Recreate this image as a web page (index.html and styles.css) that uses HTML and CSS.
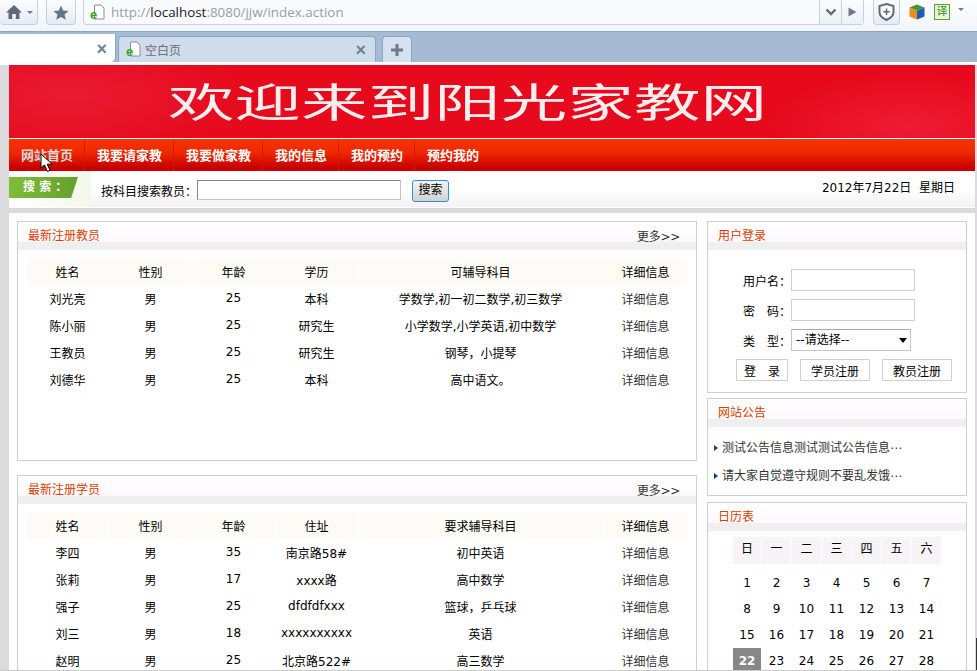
FILE: index.html
```html
<!DOCTYPE html>
<html lang="zh-CN">
<head>
    <meta charset="UTF-8">
    <title>阳光家教网</title>
    <link rel="stylesheet" href="styles.css">
</head>
<body>
<div id="window">
    <div id="toolbar">
        <div class="tool_btn home_btn">
            <svg width="18" height="16" viewBox="0 0 18 16"><path d="M9 1 L17 8.5 L14.5 8.5 L14.5 15 L10.8 15 L10.8 10 L7.2 10 L7.2 15 L3.5 15 L3.5 8.5 L1 8.5 Z" fill="#5d6b7c"/></svg>
            <i class="caret"></i>
        </div>
        <div class="tool_btn star_btn">
            <svg width="16" height="15" viewBox="0 0 16 15"><path d="M8 0.5 L10.2 5.5 L15.6 6 L11.5 9.5 L12.8 14.8 L8 12 L3.2 14.8 L4.5 9.5 L0.4 6 L5.8 5.5 Z" fill="#64748a"/></svg>
        </div>
        <div id="urlbar">
            <svg class="page_icon" width="16" height="17" viewBox="0 0 16 17"><path d="M4.5 1 H11 L14 4 V15 H4.5 Z" fill="#fff" stroke="#8a8f96"/><text x="0" y="15" class="ie_e">e</text></svg>
            <span class="url"><span class="grey">http://</span>localhost<span class="grey">:8080/jjw/index.action</span></span>
            <div class="url_end">
                <svg width="12" height="8" viewBox="0 0 12 8"><path d="M1.5 1.5 L6 6 L10.5 1.5" fill="none" stroke="#5d6b7c" stroke-width="2.4"/></svg>
            </div>
            <div class="url_end">
                <svg width="9" height="10" viewBox="0 0 9 10"><path d="M0.5 0.5 L8.5 5 L0.5 9.5 Z" fill="#6d7b8c"/></svg>
            </div>
        </div>
        <div class="tool_btn shield_btn">
            <svg width="17" height="18" viewBox="0 0 17 18"><path d="M8.5 1 L15.5 3 V9 C15.5 13 12 15.5 8.5 17 C5 15.5 1.5 13 1.5 9 V3 Z" fill="#fff" stroke="#5d6b7c" stroke-width="2"/><path d="M8.5 5.5 V12 M5.2 8.8 H11.8" stroke="#5d6b7c" stroke-width="1.6"/></svg>
        </div>
        <svg class="cube" width="16" height="16" viewBox="0 0 16 16"><path d="M8 0.5 L15.5 3.5 L8 6.8 L0.5 3.5 Z" fill="#3f9a2a"/><path d="M0.5 3.5 L8 6.8 V15.5 L0.5 12.5 Z" fill="#ee8c18"/><path d="M15.5 3.5 L8 6.8 V15.5 L15.5 12.5 Z" fill="#1c5cb8"/></svg>
        <span class="yi">译</span>
        <i class="caret yi_caret"></i>
    </div>

    <div id="tabbar">
        <div class="tab tab_active"><span class="tab_x">×</span></div>
        <div class="tab tab_blank">
            <svg class="page_icon" width="16" height="17" viewBox="0 0 16 17"><path d="M4.5 1 H11 L14 4 V15 H4.5 Z" fill="#fff" stroke="#8a8f96"/><text x="0" y="15" class="ie_e">e</text></svg>
            <span class="tab_title">空白页</span>
            <span class="tab_x">×</span>
        </div>
        <div class="tab tab_new">
            <svg width="14" height="14" viewBox="0 0 14 14"><path d="M7 1 V13 M1 7 H13" stroke="#6d7b8c" stroke-width="3"/></svg>
        </div>
    </div>
    <div id="tabline"></div>

    <div id="page">
        <div id="site">
            <div id="banner"><span id="banner_title">欢迎来到阳光家教网</span></div>
            <div id="nav">
                <a class="nav_item nav_hover">网站首页</a>
                <a class="nav_item">我要请家教</a>
                <a class="nav_item">我要做家教</a>
                <a class="nav_item">我的信息</a>
                <a class="nav_item">我的预约</a>
                <a class="nav_item nav_last">预约我的</a>
                <svg id="cursor" width="14" height="20" viewBox="0 0 14 20"><path d="M1 1 V15 L4.5 12 L7.5 18.5 L10 17.3 L7.2 11.2 L12 11 Z" fill="#fff" stroke="#000"/></svg>
            </div>
            <div id="searchbar">
                <div class="search_tag"><span class="search_label">搜 索 ：</span></div>
                <span class="search_text">按科目搜索教员：</span>
                <input class="search_input" type="text">
                <button class="search_btn">搜索</button>
                <span class="today">2012年7月22日&nbsp; 星期日</span>
            </div>
            <div id="content">
                <div id="left_col">
                    <div class="panel teacher_panel">
                        <div class="panel_head">
                            <span class="panel_title">最新注册教员</span>
                            <span class="more">更多&gt;&gt;</span>
                        </div>
                        <div class="list_body">
                            <table class="list">
                                <colgroup><col class="c1"><col class="c1"><col class="c1"><col class="c1"><col class="c5"><col class="c6"></colgroup>
                                <tr><th>姓名</th><th>性别</th><th>年龄</th><th>学历</th><th>可辅导科目</th><th>详细信息</th></tr>
                                <tr><td>刘光亮</td><td>男</td><td>25</td><td>本科</td><td>学数学,初一初二数学,初三数学</td><td class="detail">详细信息</td></tr>
                                <tr><td>陈小丽</td><td>男</td><td>25</td><td>研究生</td><td>小学数学,小学英语,初中数学</td><td class="detail">详细信息</td></tr>
                                <tr><td>王教员</td><td>男</td><td>25</td><td>研究生</td><td>钢琴，小提琴</td><td class="detail">详细信息</td></tr>
                                <tr><td>刘德华</td><td>男</td><td>25</td><td>本科</td><td>高中语文。</td><td class="detail">详细信息</td></tr>
                            </table>
                        </div>
                    </div>
                    <div class="panel">
                        <div class="panel_head">
                            <span class="panel_title">最新注册学员</span>
                            <span class="more">更多&gt;&gt;</span>
                        </div>
                        <div class="list_body">
                            <table class="list">
                                <colgroup><col class="c1"><col class="c1"><col class="c1"><col class="c1"><col class="c5"><col class="c6"></colgroup>
                                <tr><th>姓名</th><th>性别</th><th>年龄</th><th>住址</th><th>要求辅导科目</th><th>详细信息</th></tr>
                                <tr><td>李四</td><td>男</td><td>35</td><td>南京路58#</td><td>初中英语</td><td class="detail">详细信息</td></tr>
                                <tr><td>张莉</td><td>男</td><td>17</td><td>xxxx路</td><td>高中数学</td><td class="detail">详细信息</td></tr>
                                <tr><td>强子</td><td>男</td><td>25</td><td>dfdfdfxxx</td><td>篮球，乒乓球</td><td class="detail">详细信息</td></tr>
                                <tr><td>刘三</td><td>男</td><td>18</td><td>xxxxxxxxxx</td><td>英语</td><td class="detail">详细信息</td></tr>
                                <tr><td>赵明</td><td>男</td><td>25</td><td>北京路522#</td><td>高三数学</td><td class="detail">详细信息</td></tr>
                            </table>
                        </div>
                    </div>
                </div>
                <div id="right_col">
                    <div class="panel">
                        <div class="panel_head"><span class="panel_title">用户登录</span></div>
                        <div class="login_body">
                            <div class="login_row"><label class="login_label">用户名：</label><input class="login_input" type="text"></div>
                            <div class="login_row"><label class="login_label">密&emsp;码：</label><input class="login_input" type="text"></div>
                            <div class="login_row"><label class="login_label">类&emsp;型：</label>
                                <div class="fake_select">--请选择--<i class="select_arrow"></i></div>
                            </div>
                            <div class="login_btns">
                                <button class="login_btn btn_login">登&emsp;录</button>
                                <button class="login_btn btn_reg">学员注册</button>
                                <button class="login_btn btn_reg">教员注册</button>
                            </div>
                        </div>
                    </div>
                    <div class="panel">
                        <div class="panel_head"><span class="panel_title">网站公告</span></div>
                        <ul class="notice_list">
                            <li class="notice">测试公告信息测试测试公告信息⋯</li>
                            <li class="notice">请大家自觉遵守规则不要乱发饿⋯</li>
                        </ul>
                    </div>
                    <div class="panel cal_panel">
                        <div class="panel_head"><span class="panel_title">日历表</span></div>
                        <div class="cal_body">
                            <div class="cal_head">
                                <span>日</span><span>一</span><span>二</span><span>三</span><span>四</span><span>五</span><span>六</span>
                            </div>
                            <div class="cal_days">
                                <span>1</span><span>2</span><span>3</span><span>4</span><span>5</span><span>6</span><span>7</span>
                                <span>8</span><span>9</span><span>10</span><span>11</span><span>12</span><span>13</span><span>14</span>
                                <span>15</span><span>16</span><span>17</span><span>18</span><span>19</span><span>20</span><span>21</span>
                                <span class="cal_today">22</span><span>23</span><span>24</span><span>25</span><span>26</span><span>27</span><span>28</span>
                            </div>
                        </div>
                    </div>
                </div>
            </div>
        </div>
    </div>
    <div id="edge_mark"></div>
</div>
</body>
</html>
```

FILE: styles.css
```css
*{
    box-sizing: border-box;
}
body{
    margin: 0;
    font-family: "DejaVu Sans", "Noto Sans CJK SC", sans-serif;
    font-size: 12px;
    color: #000;
}
#window{
    position: relative;
    width: 977px;
    height: 671px;
    overflow: hidden;
    border-bottom: 1px solid #c4cccc;
}

/* browser toolbar */
#toolbar{
    height: 32px;
    display: flex;
    align-items: flex-start;
    background: linear-gradient(#fbfcfd, #f2f5f9);
    border-bottom: 1px solid #8aa6c4;
}
.tool_btn{
    height: 25px;
    display: flex;
    align-items: center;
    justify-content: center;
    background: linear-gradient(#fbfcfd, #e6ecf3);
    border: 1px solid #c4d0dd;
    border-top: 0;
    border-radius: 0 0 4px 4px;
}
.home_btn{
    width: 38px;
    border-left: 0;
    gap: 4px;
}
.star_btn{
    width: 30px;
    margin-left: 8px;
}
.shield_btn{
    width: 27px;
    margin-left: 9px;
}
.caret{
    width: 0;
    height: 0;
    border: 3px solid transparent;
    border-top: 3px solid #6d7b8c;
    margin-top: 3px;
}
#urlbar{
    width: 781px;
    height: 25px;
    margin-left: 7px;
    display: flex;
    align-items: center;
    background: #f8fafd;
    border: 1px solid #c4d4e4;
    border-top: 0;
    border-radius: 0 0 4px 4px;
    padding-left: 6px;
}
.page_icon{
    flex: none;
}
.ie_e{
    font-family: "Liberation Sans", sans-serif;
    font-size: 13px;
    font-weight: bold;
    fill: #36a81c;
}
.url{
    flex: 1;
    margin-left: 5px;
    font-family: "Open Sans", sans-serif;
    font-size: 13.4px;
    color: #1a1a1a;
}
.grey{
    color: #9a9ea4;
}
.url_end{
    width: 22px;
    height: 24px;
    display: flex;
    align-items: center;
    justify-content: center;
    border-left: 1px solid #c4d4e4;
    background: linear-gradient(#fbfcfd, #edf1f6);
}
.cube{
    margin: 4px 0 0 9px;
}
.yi{
    width: 16px;
    height: 16px;
    margin: 4px 0 0 9px;
    background: #e6f4d8;
    border: 1px solid #5ca032;
    color: #3c8a20;
    font-size: 11px;
    line-height: 13px;
    text-align: center;
}
.yi_caret{
    margin: 8px 0 0 8px;
}

/* tabs */
#tabbar{
    height: 30px;
    display: flex;
    background: #a5bbd3;
    gap: 2px;
}
.tab{
    height: 26px;
    margin-top: 4px;
    display: flex;
    align-items: center;
    border: 1px solid #8aa6c4;
    border-bottom: 0;
    border-radius: 4px 4px 0 0;
}
.tab_active{
    width: 116px;
    height: 28px;
    margin-top: 2px;
    justify-content: flex-end;
    padding: 2px 8px 0 0;
    background: #fff;
    border-width: 0 1px 0 0;
    border-radius: 0 0 5px 0;
}
.tab_blank{
    width: 258px;
    padding: 0 9px 0 7px;
    background: #cfdcec;
}
.tab_new{
    width: 30px;
    margin-left: 4px;
    justify-content: center;
    background: #d6e1ee;
}
.tab_x{
    color: #6d8499;
    font-family: "Liberation Sans", sans-serif;
    font-size: 18px;
    font-weight: bold;
    line-height: 18px;
}
.tab_title{
    flex: 1;
    margin-left: 3px;
    color: #6d6d6d;
    font-size: 12px;
}
#tabline{
    height: 3px;
    background: #fff;
}

/* page */
#page{
    background: #dcdadc;
    padding: 0 2px 0 9px;
}
#banner{
    height: 73px;
    padding: 0 0 3px 159px;
    display: flex;
    align-items: center;
    background:
        radial-gradient(ellipse 180px 60px at 60px 30px, #e91b32, transparent),
        radial-gradient(ellipse 140px 50px at 900px 60px, #ee1c34, transparent),
        #e60a1c;
}
#banner_title{
    display: inline-block;
    width: 600px;
    font-family: "Noto Sans CJK SC", sans-serif;
    font-size: 40px;
    font-weight: 400;
    line-height: 40px;
    white-space: nowrap;
    color: #f8eef0;
    transform: scaleX(1.664);
    transform-origin: left center;
}
#nav{
    position: relative;
    height: 33px;
    display: flex;
    background: linear-gradient(#f53a10 0, #f53000 2px, #f02a00 40%, #c80000 90%);
    border-top: 1px solid #fff;
    padding-top: 1px;
}
.nav_item{
    padding: 0 11px 0 12px;
    line-height: 30px;
    font-family: "Noto Sans CJK SC", sans-serif;
    font-size: 13px;
    font-weight: bold;
    color: #fff;
    border-right: 1px solid #dc1400;
    height: 31px;
}
.nav_last{
    border-right: 0;
}
.nav_hover{
    color: #d8d8d8;
}
#cursor{
    position: absolute;
    left: 31px;
    top: 14px;
}
#searchbar{
    height: 37px;
    display: flex;
    align-items: flex-start;
    background: linear-gradient(#fff 50%, #f4f2f4);
    border-bottom: 1px solid #fff;
}
.search_tag{
    width: 82px;
    height: 36px;
    padding-top: 6px;
    background: linear-gradient(90deg, #fff, #f2f9ea);
}
.search_label{
    display: block;
    width: 69px;
    height: 21px;
    padding-left: 14px;
    background: linear-gradient(90deg, #7ebd38, #66a02e);
    clip-path: polygon(0 0, 100% 0, 90% 100%, 0 100%);
    color: #fff;
    font-weight: bold;
    line-height: 20px;
}
.search_text{
    margin: 13px 0 0 10px;
    font-size: 12px;
    line-height: 17px;
    white-space: nowrap;
    width: 96px;
}
.search_input{
    width: 204px;
    height: 20px;
    margin-top: 9px;
    border: 1px solid #c4c4c4;
    border-top-color: #868686;
    border-left-color: #868686;
    background: #fff;
}
.search_btn{
    width: 37px;
    height: 22px;
    margin: 9px 0 0 11px;
    padding: 0 0 3px;
    border: 1px solid #2f8fd8;
    border-radius: 3px;
    background: linear-gradient(#f4f4f4, #d2d2d2);
    font-family: inherit;
    font-size: 12px;
    line-height: 16px;
    color: #000;
}
.today{
    margin: 9px 0 0 auto;
    padding-right: 20px;
    font-size: 12px;
    line-height: 17px;
    color: #000;
}
#content{
    margin-top: 5px;
    padding: 8px 8px 0;
    display: flex;
    gap: 10px;
    background: #fff;
}
#left_col{
    width: 680px;
    display: flex;
    flex-direction: column;
    gap: 14px;
}
#right_col{
    width: 260px;
    display: flex;
    flex-direction: column;
    gap: 5px;
}
.panel{
    border: 1px solid #cfcfcf;
    background: #fff;
}
.teacher_panel{
    height: 240px;
}
.cal_panel{
    margin-top: 1px;
}
.panel_head{
    height: 28px;
    display: flex;
    justify-content: space-between;
    padding: 0 16px 0 10px;
    background: linear-gradient(#fff 0, #fdf8fc 72%, #efefef 73%, #efefef 100%);
}
.panel_title{
    font-size: 12px;
    line-height: 29px;
    color: #d84000;
}
.more{
    font-size: 12px;
    line-height: 30px;
    letter-spacing: -0.3px;
    color: #333;
}

/* list tables */
.list_body{
    padding: 9px 7px 0;
}
.list{
    width: 664px;
    table-layout: fixed;
    border-collapse: separate;
    border-spacing: 2px 0;
}
.c1{
    width: 81px;
}
.c5{
    width: 243px;
}
.c6{
    width: 83px;
}
.list th{
    height: 26px;
    padding: 0 0 2px;
    background: #fefbf7;
    font-weight: normal;
}
.list td{
    height: 27px;
    padding: 0 0 1px;
    text-align: center;
    white-space: nowrap;
}
.detail{
    color: #333;
}

/* login */
.login_body{
    padding: 19px 14px 11px 28px;
}
.login_row{
    height: 22px;
    margin-bottom: 8px;
    display: flex;
    align-items: center;
}
.login_label{
    width: 55px;
    padding-left: 7px;
    white-space: nowrap;
}
.login_input{
    width: 124px;
    height: 22px;
    border: 1px solid #cfcfcf;
    background: #fff;
}
.fake_select{
    position: relative;
    width: 120px;
    height: 22px;
    padding-left: 4px;
    border: 1px solid #c4c4d0;
    border-top-color: #a8a8b0;
    line-height: 20px;
}
.select_arrow{
    position: absolute;
    right: 3px;
    top: 8px;
    width: 0;
    height: 0;
    border: 4px solid transparent;
    border-top: 5px solid #000;
}
.login_btns{
    display: flex;
    gap: 12px;
}
.login_btn{
    height: 22px;
    padding: 0;
    border: 1px solid #cfcfcf;
    background: #fff;
    font-family: inherit;
    font-size: 12px;
    color: #000;
}
.btn_login{
    width: 52px;
}
.btn_reg{
    width: 70px;
}

/* notices */
.notice_list{
    list-style: none;
    margin: 0;
    padding: 6px 0 6px 6px;
}
.notice{
    position: relative;
    height: 28px;
    padding-left: 8px;
    line-height: 30px;
    color: #333;
    white-space: nowrap;
}
.notice::before{
    content: "";
    position: absolute;
    left: 0;
    top: 12px;
    width: 0;
    height: 0;
    border: 3px solid transparent;
    border-left: 4px solid #0e3c8c;
}

/* calendar */
.cal_body{
    padding: 6px 0 0 25px;
}
.cal_head, .cal_days{
    display: grid;
    grid-template-columns: 28px repeat(6, 29px);
    column-gap: 1px;
    text-align: center;
}
.cal_head span{
    height: 27px;
    line-height: 25px;
    background: #f7f3f7;
}
.cal_days{
    margin-top: 6px;
    grid-auto-rows: 26px;
    line-height: 26px;
}
.cal_today{
    background: #888688;
    color: #fff;
    font-weight: bold;
}
#edge_mark{
    position: absolute;
    right: 0;
    bottom: 0;
    width: 1px;
    height: 32px;
    background: #333;
}
```
